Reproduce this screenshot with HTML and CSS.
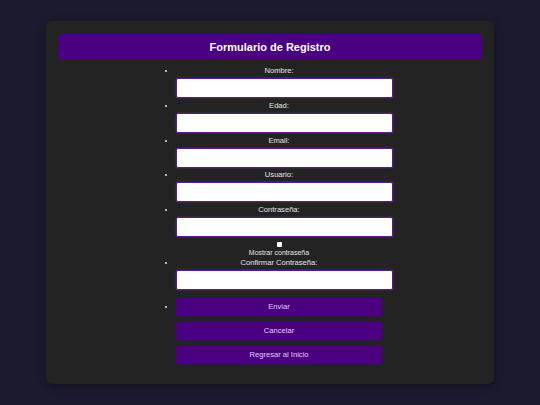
FILE: index.html
```html
<!DOCTYPE html>
<html lang="es">
<head>
  <meta charset="UTF-8">
  <meta name="viewport" content="width=device-width, initial-scale=1.0">
  <title>Formulario de Registro</title>
  <link rel="stylesheet" href="styles.css">
</head>
<body>
  <div class="form-container">
    <h1>Formulario de Registro</h1>
    <form id="registroForm">
      <ul class="field-list">
        <li>
          <label for="nombre">Nombre:</label>
          <input type="text" id="nombre">
        </li>
        <li>
          <label for="edad">Edad:</label>
          <input type="number" id="edad">
        </li>
        <li>
          <label for="email">Email:</label>
          <input type="email" id="email">
        </li>
        <li>
          <label for="usuario">Usuario:</label>
          <input type="text" id="usuario">
        </li>
        <li class="password-item">
          <label for="password">Contraseña:</label>
          <input type="password" id="password">
          <div class="show-password">
            <input type="checkbox" id="mostrar">
            <label for="mostrar">Mostrar contraseña</label>
          </div>
        </li>
        <li>
          <label for="confirmar">Confirmar Contraseña:</label>
          <input type="password" id="confirmar">
        </li>
        <li class="button-item">
          <button type="submit">Enviar</button>
          <button type="reset">Cancelar</button>
          <button type="button">Regresar al Inicio</button>
        </li>
      </ul>
    </form>
  </div>
</body>
</html>
```

FILE: styles.css
```css
/* Page */
body {
  font-family: "Liberation Sans", Arial, sans-serif;
  margin: 0;
  padding: 21px 0;
  background: #1c1a2e;
  color: #e6e6e6;
}

/* Card */
.form-container {
  width: 448px;
  margin: 0 auto;
  padding: 13px 12px 17px;
  box-sizing: border-box;
  background: #232323;
  border-radius: 6px;
  box-shadow: 0 2px 8px rgba(0, 0, 0, 0.35);
}

.form-container h1 {
  margin: 0;
  height: 26px;
  line-height: 26px;
  font-size: 11px;
  font-weight: bold;
  color: #fff;
  text-align: center;
  background: #4b0082;
  border-radius: 4px;
}

/* Fields */
.field-list {
  width: 206px;
  margin: 6px 0 0 118px;
  padding: 0;
  list-style: disc outside;
  font-size: 7.6px;
  line-height: 9px;
}

.field-list li {
  padding-bottom: 2.75px;
}

.field-list label {
  display: block;
  line-height: 9px;
  text-align: center;
  color: #e6e6e6;
}

/* inputs are a bit wider than the list, like the original */
.field-list input[type="text"],
.field-list input[type="number"],
.field-list input[type="email"],
.field-list input[type="password"] {
  display: block;
  width: 217px;
  height: 20px;
  margin: 3px 0 0;
  padding: 0 4px;
  box-sizing: border-box;
  background: #fff;
  border: 1px solid #5a1a8c;
  border-radius: 2px;
  box-shadow: 0 0 2px rgba(150, 60, 220, 0.6);
  outline: none;
}

.field-list .password-item {
  padding-bottom: 0;
}

.show-password {
  margin-top: 5px;
  padding-bottom: 1px;
  text-align: center;
}

.show-password input {
  appearance: none;
  display: block;
  width: 5px;
  height: 5px;
  margin: 0 auto 1px;
  background: #fff;
  border-radius: 1px;
}

.show-password label {
  font-size: 7px;
}

/* Buttons */
.field-list .button-item {
  padding-top: 5px;
}

.button-item button {
  display: block;
  width: 206px;
  height: 18px;
  margin: 0 0 6px;
  padding: 0;
  font-family: inherit;
  font-size: 7.6px;
  color: #e6cdf5;
  background: #4b0082;
  border: none;
  border-radius: 2px;
  box-shadow: 0 0 3px rgba(75, 0, 130, 0.7);
  cursor: pointer;
}

.button-item button:last-child {
  margin-bottom: 0;
}
```
